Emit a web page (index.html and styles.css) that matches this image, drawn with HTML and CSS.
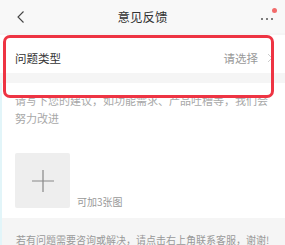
FILE: index.html
```html
<!DOCTYPE html>
<html lang="zh-CN">
<head>
  <meta charset="UTF-8" />
  <meta name="viewport" content="width=device-width, initial-scale=1.0" />
  <title>意见反馈</title>
  <link rel="stylesheet" href="styles.css">
</head>
<body>
<header class="topbar">
  <span class="back">
    <svg width="8" height="12" viewBox="0 0 8 12"><path d="M6.5 0.5 L1 6 L6.5 11.5" fill="none" stroke="#444" stroke-width="1.1"/></svg>
  </span>
  <h1>意见反馈</h1>
  <span class="more">
    <i></i><i></i><i></i>
    <b class="badge"></b>
  </span>
</header>

<!-- Type picker -->
<section class="type-row">
  <span class="label">问题类型</span>
  <span class="pick">请选择
    <svg width="6" height="10" viewBox="0 0 6 10"><path d="M1 1 L5 5 L1 9" fill="none" stroke="#ccc" stroke-width="1"/></svg>
  </span>
</section>
<div class="divider"></div>

<!-- Suggestion -->
<section class="suggest">
  <p class="placeholder">请写下您的建议，如功能需求、产品吐槽等，我们会努力改进</p>
  <div class="uploads">
    <div class="add-box">
      <svg width="24" height="24" viewBox="0 0 24 24"><path d="M12 1 V23 M1 12 H23" stroke="#888" stroke-width="1.2"/></svg>
    </div>
    <span class="hint">可加3张图</span>
  </div>
</section>

<footer class="tip">若有问题需要咨询或解决，请点击右上角联系客服，谢谢!</footer>

<div class="highlight"></div>
</body>
</html>
```

FILE: styles.css
```css
body {
  font-family: "Noto Sans CJK SC", "Noto Sans", sans-serif;
  background-color: #f5f5f5;
  margin: 0;
  padding: 0;
  width: 285px;
  height: 245px;
  overflow: hidden;
  position: relative;
}

.topbar {
  height: 33px;
  background-color: #f8f8f8;
  display: flex;
  align-items: center;
  justify-content: space-between;
  padding: 0 12px 0 17px;
  margin-bottom: 2px;
  position: relative;
}

.topbar h1 {
  margin: 0;
  font-size: 12.5px;
  font-weight: normal;
  color: #333;
  position: absolute;
  left: 0;
  right: 0;
  text-align: center;
  pointer-events: none;
}

.back {
  display: flex;
  margin-top: 1px;
}

.more {
  display: flex;
  gap: 3px;
  margin-top: 4px;
  position: relative;
}

.more i {
  width: 2px;
  height: 2px;
  border-radius: 50%;
  background-color: #555;
}

.badge {
  position: absolute;
  right: -4px;
  top: -10px;
  width: 5px;
  height: 5px;
  border-radius: 50%;
  background-color: #f26b6b;
}

.type-row {
  height: 30px;
  padding: 8px 12px 0 15px;
  background-color: #fff;
  display: flex;
  align-items: center;
  justify-content: space-between;
  font-size: 11.5px;
}

.label {
  color: #333;
}

.pick {
  color: #999;
  display: flex;
  align-items: center;
  gap: 9px;
}

.divider {
  height: 10px;
  background-color: #f5f5f5;
}

.suggest {
  background-color: #fff;
  padding: 8px 15px 10px 15px;
  border-left: 2px solid #e2f5f9;
}

.placeholder {
  margin: 0 0 0 -2px;
  font-size: 11px;
  line-height: 18px;
  color: #a8a8a8;
}

.uploads {
  display: flex;
  align-items: flex-end;
  gap: 7px;
  margin-top: 26px;
  margin-left: -2px;
}

.add-box {
  width: 55px;
  height: 55px;
  background-color: #eee;
  border-radius: 2px;
  display: flex;
  align-items: center;
  justify-content: center;
}

.hint {
  font-size: 10px;
  color: #999;
  line-height: 12px;
}

.tip {
  padding: 16px 14px 0 14px;
  font-size: 10px;
  line-height: 12px;
  color: #999;
  white-space: nowrap;
  border-left: 2px solid #e2f5f9;
}

/* annotation frame over the type row */
.highlight {
  position: absolute;
  left: 3px;
  top: 35px;
  width: 265px;
  height: 57px;
  border: 3px solid #ee3443;
  border-radius: 7px;
}
```
